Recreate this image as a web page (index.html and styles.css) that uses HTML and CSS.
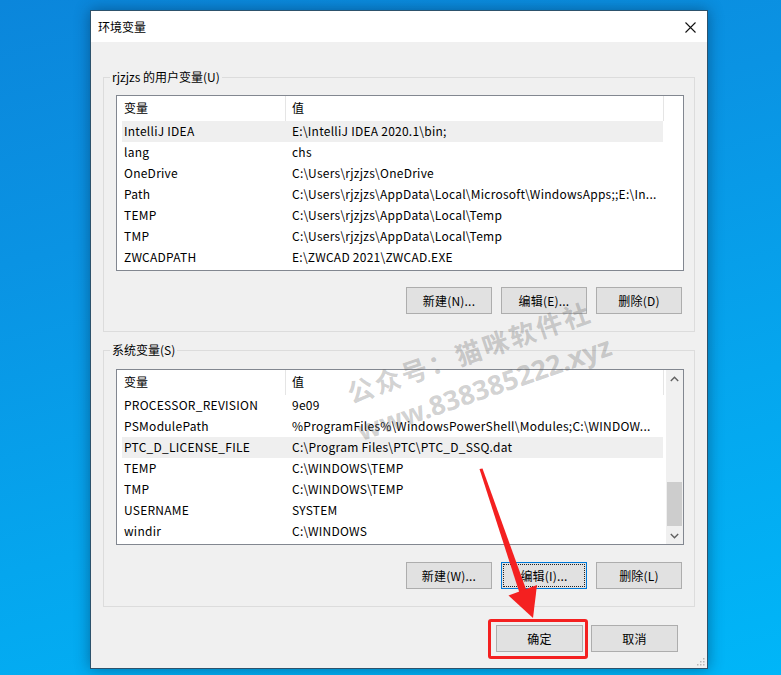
FILE: index.html
```html
<!DOCTYPE html>
<html lang="zh-CN">
<head>
<meta charset="utf-8">
<title>环境变量</title>
<link rel="stylesheet" href="styles.css">
</head>
<body>
<div class="window">
  <div class="titlebar">
    <span class="title">环境变量</span>
    <svg class="close" width="11" height="11" viewBox="0 0 11 11"><path d="M0.5 0.5 L10.5 10.5 M10.5 0.5 L0.5 10.5" stroke="#111" stroke-width="1.1" fill="none"/></svg>
  </div>
  <div class="content">
    <fieldset class="group">
      <legend>rjzjzs 的用户变量(U)</legend>
      <div class="group-inner first">
        <div class="list">
          <div class="list-body">
            <div class="hdr"><span class="h1">变量</span><span class="h2">值</span></div>
            <div class="row sel"><span class="c1">IntelliJ IDEA</span><span class="c2">E:\IntelliJ IDEA 2020.1\bin;</span></div>
            <div class="row"><span class="c1">lang</span><span class="c2">chs</span></div>
            <div class="row"><span class="c1">OneDrive</span><span class="c2">C:\Users\rjzjzs\OneDrive</span></div>
            <div class="row"><span class="c1">Path</span><span class="c2">C:\Users\rjzjzs\AppData\Local\Microsoft\WindowsApps;;E:\In...</span></div>
            <div class="row"><span class="c1">TEMP</span><span class="c2">C:\Users\rjzjzs\AppData\Local\Temp</span></div>
            <div class="row"><span class="c1">TMP</span><span class="c2">C:\Users\rjzjzs\AppData\Local\Temp</span></div>
            <div class="row"><span class="c1">ZWCADPATH</span><span class="c2">E:\ZWCAD 2021\ZWCAD.EXE</span></div>
          </div>
        </div>
        <div class="btn-row">
          <button class="btn">新建(N)...</button>
          <button class="btn">编辑(E)...</button>
          <button class="btn">删除(D)</button>
        </div>
      </div>
    </fieldset>
    <fieldset class="group second">
      <legend>系统变量(S)</legend>
      <div class="group-inner">
        <div class="list">
          <div class="list-body">
            <div class="hdr"><span class="h1">变量</span><span class="h2">值</span></div>
            <div class="row"><span class="c1">PROCESSOR_REVISION</span><span class="c2">9e09</span></div>
            <div class="row"><span class="c1">PSModulePath</span><span class="c2">%ProgramFiles%\WindowsPowerShell\Modules;C:\WINDOW...</span></div>
            <div class="row sel"><span class="c1">PTC_D_LICENSE_FILE</span><span class="c2">C:\Program Files\PTC\PTC_D_SSQ.dat</span></div>
            <div class="row"><span class="c1">TEMP</span><span class="c2">C:\WINDOWS\TEMP</span></div>
            <div class="row"><span class="c1">TMP</span><span class="c2">C:\WINDOWS\TEMP</span></div>
            <div class="row"><span class="c1">USERNAME</span><span class="c2">SYSTEM</span></div>
            <div class="row"><span class="c1">windir</span><span class="c2">C:\WINDOWS</span></div>
          </div>
          <div class="scroll">
            <div class="sb-btn"><svg width="9" height="6" viewBox="0 0 9 6"><path d="M0.8 5 L4.5 1.3 L8.2 5" stroke="#606060" stroke-width="1.4" fill="none"/></svg></div>
            <div class="sb-track"><div class="thumb"></div></div>
            <div class="sb-btn"><svg width="9" height="6" viewBox="0 0 9 6"><path d="M0.8 1 L4.5 4.7 L8.2 1" stroke="#606060" stroke-width="1.4" fill="none"/></svg></div>
          </div>
        </div>
        <div class="btn-row">
          <button class="btn">新建(W)...</button>
          <button class="btn focus">编辑(I)...</button>
          <button class="btn">删除(L)</button>
        </div>
      </div>
    </fieldset>
    <div class="footer">
      <button class="btn wide">确定</button>
      <button class="btn wide">取消</button>
    </div>
  </div>
  <svg class="grip" width="9" height="9" viewBox="0 0 9 9"><g fill="#b8b8b8"><rect x="7" y="1" width="1.5" height="1.5"/><rect x="4" y="4" width="1.5" height="1.5"/><rect x="7" y="4" width="1.5" height="1.5"/><rect x="1" y="7" width="1.5" height="1.5"/><rect x="4" y="7" width="1.5" height="1.5"/><rect x="7" y="7" width="1.5" height="1.5"/></g></svg>
</div>

<div class="wm wm1">公众号：猫咪软件社</div>
<div class="wm wm2">www.838385222.xyz</div>

<div class="redbox"></div>
<svg class="arrow" width="781" height="675" viewBox="0 0 781 675">
  <polygon points="479.5,469 482.5,468.5 527,592 520,594.5" fill="#f42020"/>
  <polygon points="533,618 508.5,595.5 537,585" fill="#f42020"/>
</svg>
</body>
</html>
```
FILE: styles.css
```css
* { box-sizing: border-box; }
html, body { margin: 0; }
body {
  width: 781px;
  height: 675px;
  overflow: hidden;
  position: relative;
  padding: 10px 0 0 90px;
  font-family: "Noto Sans CJK SC", sans-serif;
  font-size: 12px;
  color: #000;
  background: linear-gradient(165deg, #0b86db 0%, #0a93e3 30%, #05a6ee 65%, #00b6f8 100%);
}
.window {
  position: relative;
  width: 618px;
  height: 659px;
  border: 1px solid #2d526c;
  background: #f0f0f0;
  box-shadow: 0 0 14px rgba(0, 30, 60, 0.45);
  display: flex;
  flex-direction: column;
}
.titlebar {
  height: 31px;
  flex: none;
  background: #fff;
  display: flex;
  align-items: center;
  justify-content: space-between;
  padding: 0 11px 0 7px;
}
.title { line-height: 31px; }
.close { display: block; margin-top: 1px; }
.content {
  padding: 27px 12px 16px 12px;
  display: flex;
  flex-direction: column;
}
.group {
  margin: 0;
  padding: 0;
  min-width: 0;
  border: 1px solid #dcdcdc;
}
.group.second { margin-top: 10px; }
.group legend {
  margin-left: 6px;
  padding: 0 2px;
  line-height: 16px;
}
.group-inner { padding: 11px 10px 17px 12px; }
.group-inner.first { padding-top: 10px; }
.list {
  height: 176px;
  border: 1px solid #828790;
  background: #fff;
  display: flex;
}
.list-body { width: 547px; flex: none; }
.hdr {
  height: 25px;
  display: flex;
  line-height: 24px;
}
.h1 {
  width: 169px;
  padding-left: 7px;
  border-right: 1px solid #e5e5e5;
}
.h2 {
  width: 378px;
  padding-left: 6px;
  border-right: 1px solid #e5e5e5;
}
.row {
  margin-left: 5px;
  width: 541px;
  height: 21px;
  line-height: 20px;
  display: flex;
  white-space: nowrap;
  letter-spacing: 0.25px;
}
.row.sel { background: #efefef; }
.c1 { width: 164px; padding-left: 2px; overflow: hidden; }
.c2 { flex: 1; padding-left: 6px; overflow: hidden; }
.scroll {
  width: 17px;
  margin-left: auto;
  background: #f0f0f0;
  display: flex;
  flex-direction: column;
}
.sb-btn {
  height: 17px;
  display: flex;
  align-items: center;
  justify-content: center;
}
.sb-btn svg { display: block; }
.sb-track {
  flex: 1;
  display: flex;
  flex-direction: column;
  justify-content: flex-end;
  padding: 0 1px 1px 1px;
}
.thumb { height: 44px; background: #cdcdcd; }
.btn-row {
  display: flex;
  justify-content: flex-end;
  gap: 9px;
  margin-top: 16px;
  padding-right: 2px;
}
.group.second .btn-row { margin-top: 17px; }
.btn {
  width: 86px;
  height: 27px;
  margin: 0;
  padding: 0;
  border: 1px solid #adadad;
  background: #e1e1e1;
  font-family: inherit;
  font-size: 12px;
  color: #000;
  line-height: 25px;
  letter-spacing: 0.2px;
}
.btn.wide { width: 87px; }
.btn.focus {
  border-color: #0078d7;
  outline: 1px dotted #222;
  outline-offset: -3px;
}
.footer {
  display: flex;
  justify-content: flex-end;
  gap: 8px;
  margin-top: 18px;
  padding-right: 17px;
}
.grip { position: absolute; right: 2px; bottom: 2px; }
.wm {
  position: absolute;
  transform: translate(-50%, -50%) rotate(-19deg);
  white-space: nowrap;
  font-weight: bold;
  color: rgba(100, 100, 100, 0.3);
  pointer-events: none;
}
.wm1 {
  left: 469px;
  top: 351px;
  font-size: 26px;
  letter-spacing: 2.5px;
}
.wm2 {
  left: 484px;
  top: 388px;
  font-family: "Noto Sans", sans-serif;
  font-size: 27px;
}
.redbox {
  position: absolute;
  left: 488px;
  top: 619px;
  width: 100px;
  height: 40px;
  border: 3px solid #f42020;
  border-radius: 3px;
}
.arrow { position: absolute; left: 0; top: 0; pointer-events: none; }
```
